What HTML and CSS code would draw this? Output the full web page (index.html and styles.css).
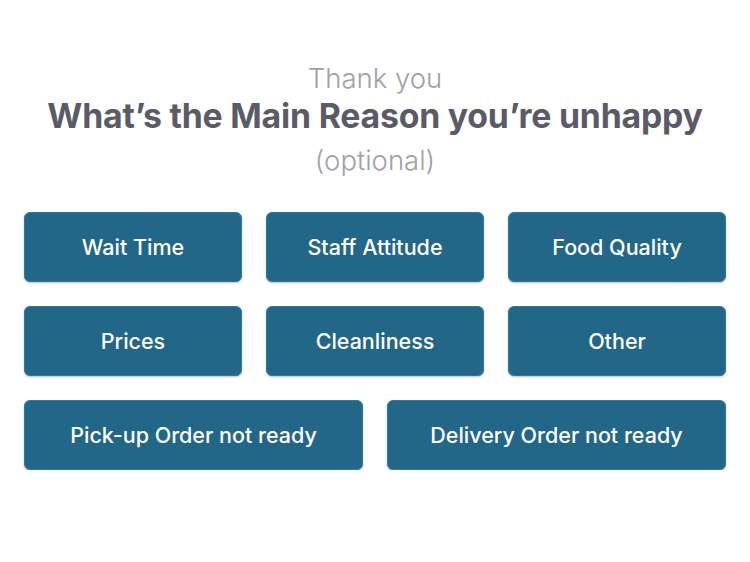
FILE: index.html
```html
<!DOCTYPE html>
<html lang="en">
  <head>
    <meta charset="UTF-8">
    <title>Feedback</title>
    <link rel="stylesheet" href="styles.css">
  </head>
  <body>
    <div id="header">
      <div class="thanks">Thank you</div>
      <h1>What’s the Main Reason you’re unhappy</h1>
      <div class="optional">(optional)</div>
    </div>
    <div id="reasons">
      <button class="reason">Wait Time</button>
      <button class="reason">Staff Attitude</button>
      <button class="reason">Food Quality</button>
      <button class="reason">Prices</button>
      <button class="reason">Cleanliness</button>
      <button class="reason">Other</button>
    </div>
    <div id="reasons-wide">
      <button class="reason">Pick-up Order not ready</button>
      <button class="reason">Delivery Order not ready</button>
    </div>
  </body>
</html>
```

FILE: styles.css
```css
html, body {
  margin: 0;
  padding: 0;
  background: #fff;
  font-family: Inter, "Liberation Sans", sans-serif;
}

body {
  padding: 62px 24px 0;
}

#header {
  text-align: center;
  margin-bottom: 36px;
}

.thanks, .optional {
  font-size: 27.5px;
  line-height: 32px;
  color: #a0a1a8;
  font-weight: 300;
}

h1 {
  margin: 1px 0 7px;
  font-size: 33.8px;
  line-height: 42px;
  font-weight: 700;
  color: #5a5b67;
  letter-spacing: -0.2px;
}

#reasons {
  display: grid;
  grid-template-columns: repeat(3, 1fr);
  gap: 24px;
}

#reasons-wide {
  display: grid;
  grid-template-columns: repeat(2, 1fr);
  gap: 24px;
  margin-top: 24px;
}

.reason {
  height: 70px;
  border: 1px solid #2f7a9c;
  border-radius: 6px;
  background: #226788;
  color: #fff;
  font-family: inherit;
  font-size: 21.5px;
  font-weight: 500;
  box-shadow: 0 1px 2px rgba(0, 0, 0, 0.25);
  padding: 0;
}
```
